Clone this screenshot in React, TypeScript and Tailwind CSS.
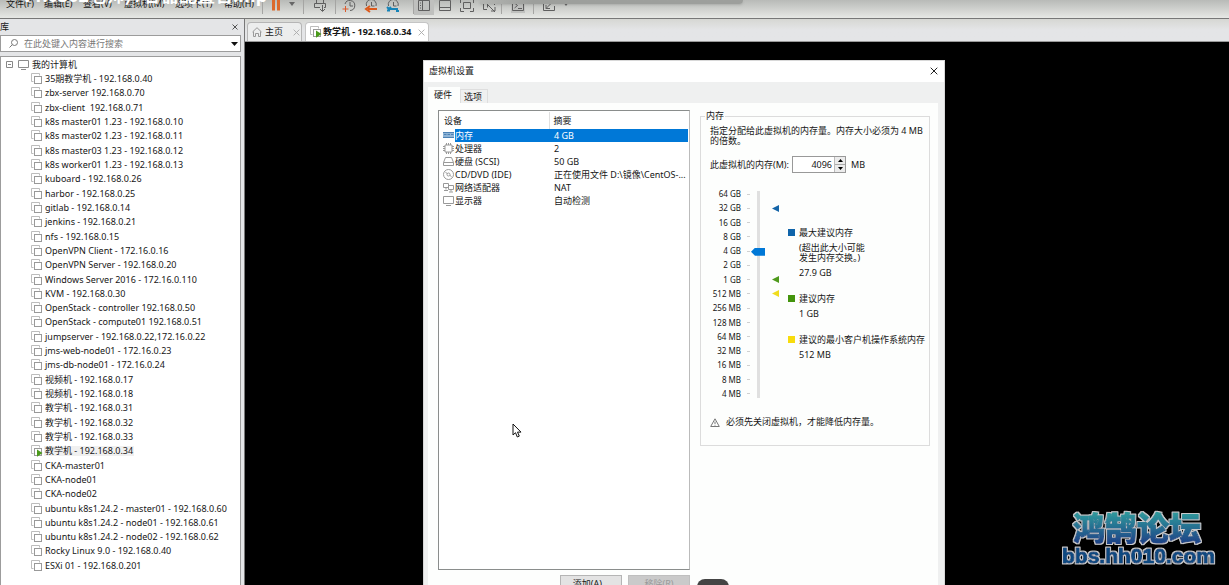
import { useState } from "react";
import type { ReactNode } from "react";

const machines = [
  "35期教学机 - 192.168.0.40",
  "zbx-server 192.168.0.70",
  "zbx-client  192.168.0.71",
  "k8s master01 1.23 - 192.168.0.10",
  "k8s master02 1.23 - 192.168.0.11",
  "k8s master03 1.23 - 192.168.0.12",
  "k8s worker01 1.23 - 192.168.0.13",
  "kuboard - 192.168.0.26",
  "harbor - 192.168.0.25",
  "gitlab - 192.168.0.14",
  "jenkins - 192.168.0.21",
  "nfs - 192.168.0.15",
  "OpenVPN Client - 172.16.0.16",
  "OpenVPN Server - 192.168.0.20",
  "Windows Server 2016 - 172.16.0.110",
  "KVM - 192.168.0.30",
  "OpenStack - controller 192.168.0.50",
  "OpenStack - compute01 192.168.0.51",
  "jumpserver - 192.168.0.22,172.16.0.22",
  "jms-web-node01 - 172.16.0.23",
  "jms-db-node01 - 172.16.0.24",
  "视频机 - 192.168.0.17",
  "视频机 - 192.168.0.18",
  "教学机 - 192.168.0.31",
  "教学机 - 192.168.0.32",
  "教学机 - 192.168.0.33",
  "教学机 - 192.168.0.34",
  "CKA-master01",
  "CKA-node01",
  "CKA-node02",
  "ubuntu k8s1.24.2 - master01 - 192.168.0.60",
  "ubuntu k8s1.24.2 - node01 - 192.168.0.61",
  "ubuntu k8s1.24.2 - node02 - 192.168.0.62",
  "Rocky Linux 9.0 - 192.168.0.40",
  "ESXi 01 - 192.168.0.201",
];

const menus = [
  { label: "文件(F)", width: "w-[38px]" },
  { label: "编辑(E)", width: "w-[39px]" },
  { label: "查看(V)", width: "w-[41px]" },
  { label: "虚拟机(M)", width: "w-[51px]" },
  { label: "选项卡(T)", width: "w-[49px]" },
  { label: "帮助(H)", width: "w-[38px]" },
];

const scale = [
  { label: "64 GB" },
  { label: "32 GB", marker: "text-[#1565a8]" },
  { label: "16 GB" },
  { label: "8 GB" },
  { label: "4 GB" },
  { label: "2 GB" },
  { label: "1 GB", marker: "text-[#4f9a1c]" },
  { label: "512 MB", marker: "text-[#f0dc1e]" },
  { label: "256 MB" },
  { label: "128 MB" },
  { label: "64 MB" },
  { label: "32 MB" },
  { label: "16 MB" },
  { label: "8 MB" },
  { label: "4 MB" },
];

const MachineIcon = ({ running = false }: { running?: boolean }) => (
  <svg width="12" height="12" viewBox="0 0 12 12" fill="none" className="shrink-0">
    <path d="M2.5 8.5h-2v-8h8v2" stroke="#bdbdbd" />
    <rect x="3.5" y="3.5" width="7" height="7" fill="#fff" stroke="#999" />
    {running && <path d="M6 4.5l5.5 3.5L6 11.8z" fill="#4a9a1a" />}
  </svg>
);

const MonitorIcon = () => (
  <svg width="11" height="10" viewBox="0 0 11 10" fill="none" stroke="#8c8c8c" className="shrink-0">
    <path d="M.5.5h10v7H.5zM3 9.5h5" />
  </svg>
);

const Caret = () => (
  <svg width="6" height="4" viewBox="0 0 6 4" className="shrink-0">
    <path d="M0 0h6L3 4z" fill="#666" />
  </svg>
);

const Close = ({ size, color }: { size: number; color: string }) => (
  <svg width={size} height={size} viewBox="0 0 8 8" stroke={color} fill="none">
    <path d="M.7.7l6.6 6.6M7.3.7L.7 7.3" />
  </svg>
);

const Separator = () => <span className="h-5 w-px shrink-0 bg-[#a5a5a3]" />;

type ToolProps = { label: string; width?: string; pressed?: boolean; children: ReactNode };

const Tool = ({ label, width = "w-[22px]", pressed, children }: ToolProps) => (
  <button
    type="button"
    aria-label={label}
    className={`flex h-[22px] shrink-0 items-center justify-center pt-1 ${width} ${pressed ? "bg-[#bfc0be]" : ""}`}
  >
    <svg width="14" height="14" viewBox="0 0 14 14" fill="none" stroke="#5f5f5f">
      {children}
    </svg>
  </button>
);

const Header = () => (
  <header className="relative h-[19px] shrink-0 overflow-hidden border-b border-[#777] bg-linear-to-b from-[#b8bab7] to-[#e7e8e5]">
    <div className="flex h-2 items-center">
      <nav className="flex shrink-0 pl-[6px]">
        {menus.map((menu) => (
          <button key={menu.label} type="button" className={`shrink-0 text-left whitespace-nowrap ${menu.width}`}>
            {menu.label}
          </button>
        ))}
      </nav>
      <Separator />
      <Tool label="暂停" width="w-[26px]">
        <path d="M4.5 0v11.500M9.5 0v11.500" stroke="#dc6a2c" strokeWidth="3" />
      </Tool>
      <Caret />
      <span className="w-[8px]" />
      <Separator />
      <Tool label="发送" width="w-[31px]">
        <path d="M3.500 4V.5h7V4M7 8.500H1.500v-4h11v4H11M9.500 6v6M7 10l2.500 2.500L12 10" />
      </Tool>
      <Separator />
      <span className="w-[2px]" />
      <Tool label="拍摄快照">
        <path d="M3 5a5 5 0 1 1 5 6.500M8 3v4h3" />
        <path d="M3.500 7v6M.5 10h6" stroke="#dc5a2c" />
      </Tool>
      <Tool label="恢复快照">
        <path d="M2.500 7a5 5 0 1 1 9.500 0M7.500 3v4h3" />
        <path d="M13 10H4M6 7l-4 3 4 3" stroke="#dc5a1c" strokeWidth="2" />
      </Tool>
      <Tool label="管理快照">
        <path d="M2.500 7a5 5 0 1 1 9.500 0M7.500 3v4h3" />
        <path d="M1 8l2 2 2-2M3 10h9M10 12h3M1 11.500h3" stroke="#1684b8" strokeWidth="2" />
      </Tool>
      <span className="w-[9px]" />
      <Separator />
      <Tool label="显示库" width="w-[20px]" pressed>
        <path d="M1.500 1.500h11v10h-11zM5.500 1.500v10M3 4h1M3 6.500h1M3 9h1" />
      </Tool>
      <Tool label="缩略图栏">
        <path d="M1.500 1.500h11v10h-11zM1.500 8.500h11" />
      </Tool>
      <Tool label="全屏">
        <path d="M.5 4V.5H4M10 .5h3.500V4M13.500 9v3.500H10M4 12.500H.5V9M3.500 3.500h7v6h-7z" />
      </Tool>
      <Tool label="Unity">
        <path d="M12.500 6V1.500h-11v9H5M4 4l9 9M5.500 8.500V4.500h4M9 12h4V8" />
      </Tool>
      <span className="w-px" />
      <Separator />
      <Tool label="控制台" width="w-[31px]">
        <rect x="-2" y="-2" width="18" height="18" fill="#bfc0be" stroke="none" />
        <path d="M1.500 1.500h11v10h-11zM3.500 4l3 2.500-3 2.500M7 9.500h4" />
      </Tool>
      <Separator />
      <Tool label="拉伸" width="w-[29px]">
        <path d="M7 1.500H1.500v10h11V7M4 9.500l9-9M4 6v3.500h4M9.500.5h3.500V4" />
      </Tool>
      <Caret />
    </div>
    <div className="pointer-events-none absolute top-0 left-[480px] h-1 w-[263px] rounded-br-sm bg-linear-to-r from-[#b3b5b2] via-[#9d9f9c] via-20% to-[#9d9f9c] shadow-sm" />
    <div className="pointer-events-none absolute -top-[17px] left-[22px] text-[18px] leading-6 font-bold whitespace-nowrap text-white">
      v1.0302老师) /容器配置官.mp
    </div>
  </header>
);

const Library = () => (
  <aside className="flex w-[241px] shrink-0 flex-col">
    <div className="flex h-4 shrink-0 items-center justify-between pr-[3px]">
      <h2>库</h2>
      <button type="button" aria-label="关闭">
        <Close size={6} color="#222" />
      </button>
    </div>
    <label className="flex h-[17px] shrink-0 items-center border border-[#9c9c9c] bg-white pr-[2px] pl-2">
      <svg width="9" height="9" viewBox="0 0 9 9" fill="none" stroke="#777" className="mr-[6px] shrink-0">
        <circle cx="5.500" cy="3.500" r="3" />
        <path d="M3.300 5.700L.5 8.500" />
      </svg>
      <input
        type="text"
        aria-label="搜索"
        placeholder="在此处键入内容进行搜索"
        className="min-w-0 flex-1 outline-none placeholder:text-[#777]"
      />
      <svg width="7" height="4" viewBox="0 0 7 4">
        <path d="M0 0h7L3.500 4z" fill="#111" />
      </svg>
    </label>
    <div className="mt-1 flex min-h-0 flex-1 flex-col border border-b-0 border-[#9c9c9c] bg-white pb-3">
      <div className="flex h-[15px] shrink-0 items-center pl-[5px]">
        <svg width="7" height="7" viewBox="0 0 7 7" fill="none" stroke="#888">
          <path d="M.5.5h6v6h-6zM2 3.500h3" />
        </svg>
        <span className="w-[5px]" />
        <MonitorIcon />
        <span className="pl-[3px]">我的计算机</span>
      </div>
      <ul className="flex min-h-0 flex-1 flex-col">
        {machines.map((name) => {
          const active = name === "教学机 - 192.168.0.34";
          return (
            <li key={name} className="flex min-h-0 flex-1 items-center gap-px pl-[30px]">
              <MachineIcon running={active} />
              <span className={`px-px whitespace-pre ${active ? "bg-[#f0f0f0]" : ""}`}>{name}</span>
            </li>
          );
        })}
      </ul>
    </div>
  </aside>
);

const devices: { name: string; summary: string; icon: ReactNode }[] = [
  {
    name: "内存",
    summary: "4 GB",
    icon: (
      <>
        <path d="M0 2h11v6H0z" fill="#8fb4d6" stroke="none" />
        <path d="M1 4.500h2.500M4.500 4.500h2.500M8 4.500h2.500M0 2.500h11M0 7.500h11" stroke="#4d82b5" />
      </>
    ),
  },
  {
    name: "处理器",
    summary: "2",
    icon: <path d="M2 2h7v7H2zM3.500 0v2M5.500 0v2M7.500 0v2M3.500 9v2M5.500 9v2M7.500 9v2M0 3.500h2M0 5.500h2M0 7.500h2M9 3.500h2M9 5.500h2M9 7.500h2" />,
  },
  { name: "硬盘 (SCSI)", summary: "50 GB", icon: <path d="M.5 6.500l2-5h6l2 5v3H.5zM.5 6.500h10" /> },
  {
    name: "CD/DVD (IDE)",
    summary: "正在使用文件 D:\\镜像\\CentOS-...",
    icon: (
      <>
        <circle cx="5.500" cy="5.500" r="5" />
        <circle cx="5.500" cy="5.500" r="1.500" />
        <path d="M2.500 3.500l2 1M7 6.500l1.500 1" />
      </>
    ),
  },
  {
    name: "网络适配器",
    summary: "NAT",
    icon: <path d="M.5 1.500h5v4h-5zM5.500 3.500h5v4h-5zM3 5.500v2M1 8.500h4M8 7.500v2M6 10h4" />,
  },
  { name: "显示器", summary: "自动检测", icon: <path d="M.5 1.500h10v7H.5zM3 10.500h5" /> },
];

const DeviceTable = () => (
  <div className="h-[460px] border border-[#8a8d8c] border-r-[#bbb] bg-white p-px">
    <table className="w-full table-fixed border-collapse">
      <thead>
        <tr className="h-[17px] text-left">
          <th className="w-[109px] border-r border-[#e0e0e0] p-0 pl-1 font-normal">设备</th>
          <th className="p-0 pl-1 font-normal">摘要</th>
        </tr>
      </thead>
      <tbody>
        {devices.map((device, i) => (
          <tr key={device.name} className="h-[13px] whitespace-nowrap">
            <td className="p-0">
              <div className="flex h-[13px] items-center gap-px pl-[3px]">
                <svg width="11" height="11" viewBox="0 0 11 11" fill="none" stroke="#999" className="shrink-0">
                  {device.icon}
                </svg>
                <span className={`flex-1 ${i === 0 ? "bg-[#0078d7] leading-[13px] text-white" : ""}`}>
                  {device.name}
                </span>
              </div>
            </td>
            <td className={`overflow-hidden p-0 pl-[5px] ${i === 0 ? "bg-[#0078d7] text-white" : ""}`}>
              {device.summary}
            </td>
          </tr>
        ))}
      </tbody>
    </table>
  </div>
);

const Legend = ({ color, title, children }: { color: string; title: string; children: ReactNode }) => (
  <div className="flex gap-1">
    <span className={`mt-px size-[7px] shrink-0 ${color}`} />
    <div className="flex flex-col gap-[5px] whitespace-nowrap">
      <p>{title}</p>
      {children}
    </div>
  </div>
);

const MemoryPanel = () => {
  const [memory, setMemory] = useState("4096");
  const [step, setStep] = useState(10);

  return (
    <fieldset className="mt-px h-[335px] w-[230px] shrink-0 border border-[#dcdcdc] pl-[9px]">
      <legend className="-ml-[5px] px-px">内存</legend>
      <p className="mt-[5px] whitespace-nowrap">
        指定分配给此虚拟机的内存量。内存大小必须为 4 MB
        <br />
        的倍数。
      </p>
      <div className="mt-[10px] flex h-[17px] items-center">
        <label htmlFor="memory" className="w-[82px] whitespace-nowrap">
          此虚拟机的内存(M):
        </label>
        <div className="flex h-[17px] w-[54px] border border-[#999] bg-white">
          <input
            id="memory"
            type="text"
            value={memory}
            onChange={(e) => setMemory(e.target.value)}
            className="min-w-0 flex-1 pr-[2px] text-right outline-none"
          />
          <div className="flex w-[11px] flex-col border-l border-[#bbb] bg-[#ececec]">
            <button
              type="button"
              aria-label="增加"
              onClick={() => setMemory(String(Number(memory) + 4))}
              className="flex flex-1 items-center justify-center border-b border-[#aaa]"
            >
              <svg width="5" height="3" viewBox="0 0 5 3">
                <path d="M0 3h5L2.500 0z" />
              </svg>
            </button>
            <button
              type="button"
              aria-label="减少"
              onClick={() => setMemory(String(Number(memory) - 4))}
              className="flex flex-1 items-center justify-center"
            >
              <svg width="5" height="3" viewBox="0 0 5 3">
                <path d="M0 0h5L2.500 3z" />
              </svg>
            </button>
          </div>
        </div>
        <span className="pl-[5px]">MB</span>
      </div>

      <div className="mt-[14px] flex h-[214px]">
        <ul className="flex w-[41px] flex-col text-right text-[8px]">
          {scale.map(({ label }) => (
            <li key={label} className="flex flex-1 items-center justify-end gap-[6px] pr-px whitespace-nowrap">
              {label}
              <span className="h-px w-[3px] bg-[#d0d0d0]" />
            </li>
          ))}
        </ul>
        <input
          type="range"
          aria-label="内存"
          min={0}
          max={14}
          value={step}
          onChange={(e) => setStep(Number(e.target.value))}
          className="mt-1 h-[207px] w-[14px] appearance-none bg-[linear-gradient(to_right,transparent_6px,#e0e0e0_6px,#e0e0e0_9px,transparent_9px)] [direction:rtl] [writing-mode:vertical-lr] [&::-webkit-slider-thumb]:h-2 [&::-webkit-slider-thumb]:w-[14px] [&::-webkit-slider-thumb]:appearance-none [&::-webkit-slider-thumb]:bg-[#0078d7] [&::-webkit-slider-thumb]:[clip-path:polygon(0_50%,4px_0,100%_0,100%_100%,4px_100%)]"
        />
        <ul className="flex w-[23px] flex-col pl-[7px]">
          {scale.map(({ label, marker }) => (
            <li key={label} className="flex flex-1 items-center">
              {marker && (
                <svg width="7" height="7" viewBox="0 0 7 7" className={marker}>
                  <path d="M0 3.500L7 0v7z" fill="currentColor" />
                </svg>
              )}
            </li>
          ))}
        </ul>
        <div className="flex flex-col pt-[41px]">
          <Legend color="bg-[#0f64aa]" title="最大建议内存">
            <p>
              (超出此大小可能
              <br />
              发生内存交换。)
            </p>
            <p>27.9 GB</p>
          </Legend>
          <span className="h-4" />
          <Legend color="bg-[#43940c]" title="建议内存">
            <p>1 GB</p>
          </Legend>
          <span className="h-4" />
          <Legend color="bg-[#f8dc0c]" title="建议的最小客户机操作系统内存">
            <p>512 MB</p>
          </Legend>
        </div>
      </div>

      <p className="mt-4 flex items-center gap-[6px] whitespace-nowrap">
        <svg width="10" height="9" viewBox="0 0 10 9" fill="none" stroke="#777">
          <path d="M5 .8L9.300 8.500H.7zM5 3.500v2.500M5 6.800v.8" />
        </svg>
        必须先关闭虚拟机，才能降低内存量。
      </p>
    </fieldset>
  );
};

const SettingsDialog = () => (
  <section
    role="dialog"
    aria-label="虚拟机设置"
    className="absolute top-[18px] left-[178px] w-[522px] border border-[#d8d8d8] bg-[#eff0f0]"
  >
    <div className="flex h-[21px] items-center justify-between bg-white pr-[6px] pb-[2px] pl-[5px]">
      <h1>虚拟机设置</h1>
      <button type="button" aria-label="关闭">
        <Close size={8} color="#222" />
      </button>
    </div>
    <div className="flex h-[21px] items-end px-1" role="tablist">
      <button type="button" role="tab" aria-selected="true" className="h-4 w-[32px] bg-[#fdfefd] pl-[6px] text-left">
        硬件
      </button>
      <button
        type="button"
        role="tab"
        aria-selected="false"
        className="h-[14px] w-[28px] border border-b-0 border-[#dedede] pl-[3px] text-left"
      >
        选项
      </button>
    </div>
    <div className="mx-1 mr-[6px] flex items-start gap-[10px] bg-[#fdfefd] pt-[7px] pl-[10px]">
      <div className="w-[252px] shrink-0">
        <DeviceTable />
        <div className="mt-[5px] flex justify-end gap-[6px]">
          <button type="button" className="h-[18px] w-[62px] border border-[#b5b5b5] bg-[#e3e3e3]">
            添加(A)...
          </button>
          <button type="button" disabled className="h-[18px] w-[62px] border border-[#bfbfbf] bg-[#cacaca] text-[#999]">
            移除(R)
          </button>
        </div>
      </div>
      <MemoryPanel />
    </div>
  </section>
);

const Watermark = () => (
  <svg width="160" height="64" className="absolute right-[12px] bottom-[12px]">
    <defs>
      <linearGradient id="teal" x1="0" y1="0" x2="0" y2="1">
        <stop offset="20%" stopColor="#2f9a9c" />
        <stop offset="90%" stopColor="#1d3f86" />
      </linearGradient>
      <filter id="outline" x="-5%" y="-20%" width="110%" height="140%">
        <feMorphology in="SourceAlpha" operator="dilate" radius="1" result="wide" />
        <feFlood floodColor="#c6c9cc" />
        <feComposite in2="wide" operator="in" />
        <feMerge>
          <feMergeNode />
          <feMergeNode in="SourceGraphic" />
        </feMerge>
      </filter>
    </defs>
    <g strokeWidth="1" strokeLinejoin="round" fontWeight="900" filter="url(#outline)">
      <text x="16" y="31" fontSize="32" fill="url(#teal)" stroke="url(#teal)" fontFamily="'Noto Sans CJK SC', sans-serif">
        鸿鹄论坛
      </text>
      <text x="5" y="54" fontSize="21" fill="#0d4a80" stroke="#0d4a80" fontFamily="'Liberation Sans', sans-serif">
        bbs.hh010.com
      </text>
    </g>
  </svg>
);

export default function App() {
  return (
    <div className="flex h-screen flex-col overflow-hidden bg-[#e4e5e7] font-['Noto_Sans','Noto_Sans_CJK_SC',sans-serif] text-[9px] leading-[10px] text-[#161616]">
      <Header />
      <div className="flex min-h-0 flex-1">
        <Library />
        <main className="ml-[3px] flex min-w-0 flex-1 flex-col border-l border-[#777]">
          <div className="flex h-[23px] shrink-0 items-end gap-[3px] border-b border-[#999] bg-linear-to-b from-[#d6d7d3] to-[#e4e5e7] to-50% pl-[2px]">
            <div className="flex h-[19px] w-[55px] items-center rounded-t-sm border border-b-0 border-[#b5b5b5] bg-[#eceded] pl-1">
              <svg width="10" height="10" viewBox="0 0 10 10" fill="none" stroke="#999">
                <path d="M.5 5L5 .7 9.500 5M1.500 4.500v5h2v-3h3v3h2v-5" />
              </svg>
              <button type="button" className="flex-1 pl-[3px] text-left">
                主页
              </button>
              <button type="button" aria-label="关闭主页" className="pr-px">
                <Close size={7} color="#a8a8a8" />
              </button>
            </div>
            <div className="flex h-[19px] w-[124px] items-center rounded-t-sm border border-b-0 border-[#c5c5c5] bg-white pl-1">
              <MachineIcon running />
              <button type="button" className="flex-1 pl-px text-left font-bold whitespace-nowrap">
                教学机 - 192.168.0.34
              </button>
              <button type="button" aria-label="关闭教学机" className="pr-[3px]">
                <Close size={7} color="#a8a8a8" />
              </button>
            </div>
          </div>
          <div className="relative min-h-0 flex-1 overflow-hidden bg-black">
            <SettingsDialog />
            <svg width="10" height="15" viewBox="0 0 10 15" className="absolute top-[381px] left-[267px]">
              <path d="M1 1v11l2.500-2.300L5.300 14l2-.9-1.800-4H9z" fill="#fff" stroke="#111" />
            </svg>
            <span className="absolute -bottom-[10px] left-[452px] h-4 w-[32px] rounded-full bg-[#444]" />
            <Watermark />
          </div>
        </main>
      </div>
    </div>
  );
}
